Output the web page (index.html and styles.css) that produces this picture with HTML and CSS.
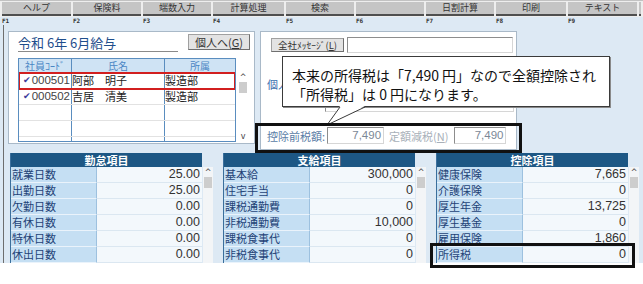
FILE: index.html
```html
<!DOCTYPE html>
<html lang="ja">
<head>
  <meta charset="UTF-8" />
  <title>給与計算 - 月次給与</title>
  <link rel="stylesheet" href="styles.css">
</head>
<body>
  <div class="screen">
    <div class="fkeys">
      <div class="fkey">ヘルプ</div>
      <div class="fkey">保険料</div>
      <div class="fkey">端数入力</div>
      <div class="fkey">計算処理</div>
      <div class="fkey">検索</div>
      <div class="fkey"></div>
      <div class="fkey">日割計算</div>
      <div class="fkey">印刷</div>
      <div class="fkey">テキスト</div>
      <div class="fkey"></div>
    </div>

    <div class="app">
      <div class="flabels">
        <span>F1</span><span>F2</span><span>F3</span><span>F4</span><span>F5</span>
        <span>F6</span><span>F7</span><span>F8</span><span>F9</span><span></span>
      </div>

      <div class="main">
        <div class="upper">
          <section class="panel list-panel">
            <div class="title-row">
              <h1 class="period">令和 6年 6月給与</h1>
              <button class="btn btn-person">個人へ(<u>G</u>)</button>
            </div>
            <div class="emp-box">
              <div class="emp-table">
                <div class="emp-row emp-head"><span>社員ｺｰﾄﾞ</span><span>氏名</span><span>所属</span></div>
                <div class="emp-row selected"><span class="code"><i class="check">✔</i>000501</span><span>阿部　明子</span><span>製造部</span></div>
                <div class="emp-row"><span class="code"><i class="check">✔</i>000502</span><span>吉居　清美</span><span>製造部</span></div>
                <div class="emp-row"><span class="code"></span><span></span><span></span></div>
                <div class="emp-row"><span class="code"></span><span></span><span></span></div>
                <div class="emp-row"><span class="code"></span><span></span><span></span></div>
              </div>
              <div class="vscroll emp-scroll">
                <span class="arrow">^</span>
                <span class="thumb"></span>
                <span class="arrow down">v</span>
              </div>
            </div>
          </section>

          <section class="panel msg-panel">
            <div class="msg-row">
              <button class="btn btn-msg">全社ﾒｯｾｰｼﾞ(<u>L</u>)</button>
              <div class="field msg-field"></div>
            </div>
            <div class="personal-row">
              <span class="personal-label">個人ﾒｯｾｰｼﾞ</span>
              <div class="field personal-field"></div>
            </div>
            <div class="tax-row">
              <span class="tax-label">控除前税額:</span>
              <div class="field num-field before-field">7,490</div>
              <span class="tax-label muted">定額減税(<u>N</u>)</span>
              <div class="field num-field reduce-field">7,490</div>
            </div>
          </section>
        </div>

        <div class="lower">
          <div class="grid-wrap">
            <div class="items">
              <div class="items-head">勤怠項目</div>
              <div class="item-row"><span class="item-name">就業日数</span><span class="item-val">25.00</span></div>
              <div class="item-row"><span class="item-name">出勤日数</span><span class="item-val">25.00</span></div>
              <div class="item-row"><span class="item-name">欠勤日数</span><span class="item-val">0.00</span></div>
              <div class="item-row"><span class="item-name">有休日数</span><span class="item-val">0.00</span></div>
              <div class="item-row"><span class="item-name">特休日数</span><span class="item-val">0.00</span></div>
              <div class="item-row"><span class="item-name">休出日数</span><span class="item-val">0.00</span></div>
            </div>
            <div class="vscroll grid-scroll"><span class="arrow">^</span><span class="thumb"></span></div>
          </div>

          <div class="grid-wrap">
            <div class="items">
              <div class="items-head">支給項目</div>
              <div class="item-row"><span class="item-name">基本給</span><span class="item-val">300,000</span></div>
              <div class="item-row"><span class="item-name">住宅手当</span><span class="item-val">0</span></div>
              <div class="item-row"><span class="item-name">課税通勤費</span><span class="item-val">0</span></div>
              <div class="item-row"><span class="item-name">非税通勤費</span><span class="item-val">10,000</span></div>
              <div class="item-row"><span class="item-name">課税食事代</span><span class="item-val">0</span></div>
              <div class="item-row"><span class="item-name">非税食事代</span><span class="item-val">0</span></div>
            </div>
            <div class="vscroll grid-scroll"><span class="arrow">^</span><span class="thumb"></span></div>
          </div>

          <div class="grid-wrap">
            <div class="items">
              <div class="items-head">控除項目</div>
              <div class="item-row"><span class="item-name">健康保険</span><span class="item-val">7,665</span></div>
              <div class="item-row"><span class="item-name">介護保険</span><span class="item-val">0</span></div>
              <div class="item-row"><span class="item-name">厚生年金</span><span class="item-val">13,725</span></div>
              <div class="item-row"><span class="item-name">厚生基金</span><span class="item-val">0</span></div>
              <div class="item-row"><span class="item-name">雇用保険</span><span class="item-val">1,860</span></div>
              <div class="item-row"><span class="item-name">所得税</span><span class="item-val">0</span></div>
            </div>
            <div class="vscroll grid-scroll"><span class="arrow">^</span><span class="thumb"></span></div>
          </div>
        </div>
      </div>
    </div>

    <!-- 注記（吹き出しと強調枠） -->
    <div class="callout">
      本来の所得税は「7,490 円」なので全額控除され<br>
      「所得税」は 0 円になります。
    </div>
    <svg class="callout-tail" width="50" height="22" viewBox="0 0 50 22">
      <polygon points="20,0 45,0 7,19" fill="#fff" />
      <polyline points="20,1 7,19 45,1" fill="none" stroke="#3a3a3a" stroke-width="1" />
    </svg>
    <div class="mark mark-before"></div>
    <div class="mark mark-tax"></div>
  </div>
</body>
</html>
```

FILE: styles.css
```css
body {
  margin: 0;
  background: #fff;
  font-family: "Noto Sans CJK JP", "Liberation Sans", sans-serif;
  color: #222;
}

.screen {
  position: relative;
  width: 643px;
  height: 284px;
  overflow: hidden;
}

/* ファンクションキー */
.fkeys, .flabels {
  display: grid;
  grid-template-columns: 71px 70px 70px 73px 70px 70px 70px 72px 71px 1fr;
  padding-left: 2px;
}

.fkeys {
  height: 17px;
  box-sizing: border-box;
  background: #eeeeee;
  border-top: 1px solid #c2c2c2;
  align-items: start;
}

.fkey {
  margin: 1px 2px 0 0;
  height: 12px;
  background: #c5c5c5;
  border-bottom: 2px solid #4f4f4f;
  font-size: 9px;
  line-height: 12px;
  text-align: center;
  color: #333;
}

.app {
  background: #dde9f4;
}

.flabels {
  height: 8px;
  font: bold 6px "DejaVu Sans Mono", monospace;
  line-height: 8px;
  color: #333;
}

.main {
  margin-left: 3px;
  border-left: 1px solid #6e6e6e;
  height: 238px;
  overflow: hidden;
  padding: 6px 0 0 4px;
  box-sizing: border-box;
}

.upper {
  display: flex;
  gap: 5px;
  height: 122px;
}

.panel {
  background: #fff;
  border: 1px solid #a9b9c8;
  box-sizing: border-box;
}

/* 社員一覧 */
.list-panel {
  width: 247px;
  height: 113px;
  padding: 1px 4px 0 9px;
}

.title-row {
  display: flex;
  justify-content: space-between;
  align-items: flex-start;
  height: 20px;
}

.period {
  margin: 1px 0 0;
  width: 160px;
  font-size: 13px;
  font-weight: normal;
  line-height: 17px;
  color: #1f4e8c;
  border-bottom: 1px solid #8a8a8a;
}

.btn {
  padding: 0;
  font-family: "Noto Sans CJK JP", sans-serif;
  background: #e3e3e3;
  border: 1px solid #a0a0a0;
  border-right-color: #6f6f6f;
  border-bottom-color: #6f6f6f;
  color: #333;
  box-sizing: border-box;
}

.btn-person {
  margin-top: 1px;
  width: 62px;
  height: 16px;
  font-size: 11px;
  line-height: 13px;
}

.emp-box {
  display: flex;
  margin-top: 5px;
}

.emp-table {
  width: 218px;
  height: 84px;
  overflow: hidden;
  border: 1px solid #5a8dbf;
  box-sizing: border-box;
}

.emp-row {
  display: grid;
  grid-template-columns: 53px 93px 1fr;
  height: 16px;
  box-sizing: border-box;
  border-bottom: 1px solid #e2e2e2;
  font-size: 11px;
  line-height: 15px;
}

.emp-row span {
  border-right: 1px solid #5a8dbf;
  white-space: nowrap;
}

.emp-row span:last-child {
  border-right: none;
}

.emp-head {
  height: 14px;
  font-size: 10px;
  line-height: 13px;
  background: #cfe3f4;
  color: #4a86c4;
  text-align: center;
  border-bottom: none;
}

.emp-row.selected {
  outline: 2px solid #d21f1f;
  outline-offset: -1px;
}

.code {
  display: flex;
  justify-content: space-between;
  padding: 0 1px 0 4px;
  font-family: "Liberation Sans Narrow", "Liberation Sans", sans-serif;
  font-size: 11.5px;
  color: #444;
}

.check {
  font-style: normal;
  font-size: 9px;
  color: #3c3c9c;
}

.vscroll {
  display: flex;
  flex-direction: column;
  align-items: center;
  width: 10px;
  background: #f3f5f7;
  font: 8px "DejaVu Sans", sans-serif;
  color: #444;
}

.vscroll .arrow {
  height: 10px;
  line-height: 11px;
}

.vscroll .thumb {
  width: 8px;
  height: 11px;
  background: #cdcdcd;
}

.vscroll .down {
  margin-top: auto;
  line-height: 9px;
}

.emp-scroll {
  margin: 14px 0 0 2px;
  height: 70px;
  background: #fff;
}

/* メッセージ欄 */
.msg-panel {
  width: 257px;
  height: 119px;
  padding: 5px 0 0 6px;
}

.msg-row {
  display: flex;
  gap: 3px;
  margin-left: 4px;
}

.btn-msg {
  margin-top: 1px;
  width: 73px;
  height: 14px;
  font-size: 9.5px;
  line-height: 11px;
}

.field {
  background: #fff;
  border: 1px solid #8d8d8d;
  border-right-color: #d6d6d6;
  border-bottom-color: #d6d6d6;
  box-sizing: border-box;
}

.msg-field {
  width: 166px;
  height: 16px;
}

.personal-row {
  display: flex;
  align-items: center;
  gap: 3px;
  margin-top: 3px;
}

.personal-label {
  font-size: 11px;
  line-height: 12px;
  color: #3a6eae;
  white-space: nowrap;
}

.personal-field {
  flex: 1;
  margin-right: 2px;
  height: 56px;
}

.tax-row {
  display: flex;
  align-items: center;
  margin-top: 15px;
  font-size: 11px;
  line-height: 14px;
}

.tax-label {
  color: #5a7ca5;
  white-space: nowrap;
}

.tax-label.muted {
  margin: 0 6px 0 5px;
  color: #a8b0b9;
}

.num-field {
  height: 17px;
  padding-right: 2px;
  text-align: right;
  font-family: "Liberation Sans Narrow", "Liberation Sans", sans-serif;
  font-size: 11.5px;
  line-height: 15px;
  color: #7b8896;
}

.before-field {
  width: 57px;
  margin-left: 2px;
}

.reduce-field {
  width: 52px;
}

/* 明細グリッド */
.lower {
  display: flex;
  gap: 10px;
  margin-left: 2px;
}

.grid-wrap {
  display: flex;
}

.items {
  width: 192px;
  border-left: 1px solid #3b6f9c;
  box-sizing: border-box;
}

.items-head {
  height: 14px;
  background: #1d5784;
  color: #fff;
  font-size: 11px;
  font-weight: bold;
  line-height: 14px;
  text-align: center;
}

.item-row {
  display: grid;
  grid-template-columns: 86px 1fr;
  height: 16px;
  font-size: 11px;
  line-height: 15px;
}

.item-name {
  background: #c5dff3;
  color: #1f4377;
  border-right: 1px solid #9dc1df;
  border-bottom: 1px solid #eaf3fb;
  padding-left: 1px;
  white-space: nowrap;
}

.item-val {
  background: #f3f8fc;
  border-bottom: 1px solid #dbe7f1;
  text-align: right;
  padding-right: 2px;
  font-family: "Liberation Sans Narrow", "Liberation Sans", sans-serif;
  font-size: 12.5px;
  color: #333;
}

.grid-scroll {
  margin: 14px 0 0 1px;
  height: 100px;
}

/* 吹き出し・強調枠 */
.callout {
  position: absolute;
  left: 282px;
  top: 56px;
  width: 328px;
  height: 51px;
  box-sizing: border-box;
  padding: 9px 0 0 9px;
  background: #fff;
  border: 1px solid #3a3a3a;
  box-shadow: 1px 1px 0 #8a8a8a;
  font-size: 14px;
  line-height: 19px;
  color: #111;
  white-space: nowrap;
}

.callout-tail {
  position: absolute;
  left: 320px;
  top: 106px;
}

.mark {
  position: absolute;
  border: 3px solid #111;
  box-sizing: border-box;
}

.mark-before {
  left: 255px;
  top: 123px;
  width: 267px;
  height: 30px;
}

.mark-tax {
  left: 430px;
  top: 243px;
  width: 205px;
  height: 25px;
}
```
